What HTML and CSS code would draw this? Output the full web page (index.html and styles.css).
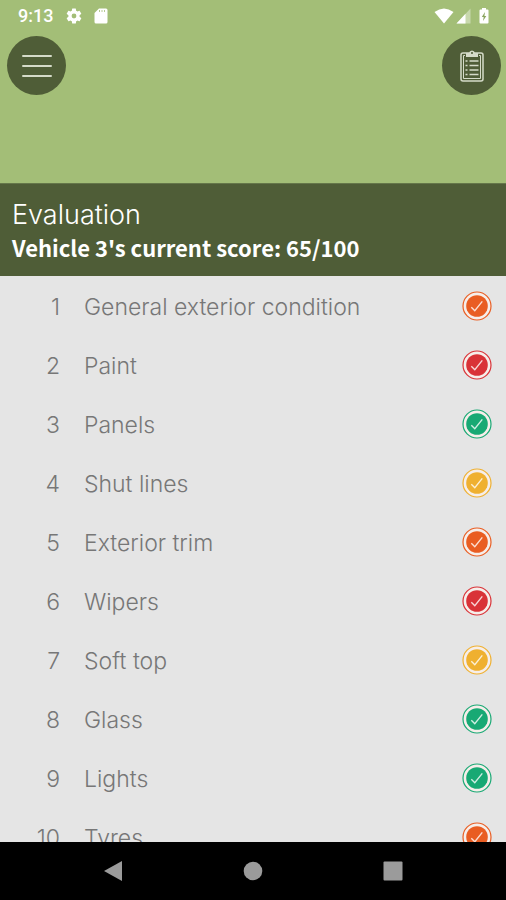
FILE: index.html
```html
<!DOCTYPE html>
<html lang="en">
<head>
<meta charset="utf-8">
<meta name="viewport" content="width=device-width, initial-scale=1">
<title>Evaluation</title>
<link rel="stylesheet" href="styles.css">
</head>
<body>
<svg class="sprite" aria-hidden="true">
  <symbol id="check" viewBox="0 0 30 30">
    <circle cx="15" cy="15" r="14" fill="#f6eeea" stroke="currentColor" stroke-width="1.2"/>
    <circle cx="15" cy="15" r="10.8" fill="currentColor"/>
    <path d="M9.3 16.2 12.8 19.8 20.3 10.4" fill="none" stroke="#fff" stroke-opacity=".8" stroke-width="1.4"/>
  </symbol>
</svg>
<header class="top">
  <div class="status">
    <span class="time">9:13</span>
    <svg class="gear" viewBox="0 0 24 24"><path fill="#fff" fill-rule="evenodd" d="M19.4 13a7.500 7.500 0 0 0 0-2l2.100-1.650a.5.5 0 0 0 .12-.64l-2-3.460a.5.5 0 0 0-.61-.22l-2.490 1a7.300 7.300 0 0 0-1.690-.98l-.38-2.650A.49.49 0 0 0 14 2h-4a.49.49 0 0 0-.49.420l-.38 2.650c-.61.25-1.170.59-1.690.98l-2.490-1a.5.5 0 0 0-.61.22l-2 3.460a.5.5 0 0 0 .12.640L4.570 11a7.900 7.900 0 0 0 0 2l-2.110 1.650a.5.5 0 0 0-.12.640l2 3.460c.12.220.390.300.610.220l2.490-1c.52.400 1.080.730 1.690.980l.38 2.650c.03.240.240.420.490.420h4c.25 0 .46-.18.490-.42l.38-2.650a7.700 7.700 0 0 0 1.690-.98l2.490 1c.23.090.490 0 .61-.22l2-3.460a.5.5 0 0 0-.12-.64zM12 15.200a3.200 3.200 0 1 1 0-6.400 3.200 3.200 0 0 1 0 6.400z"/></svg>
    <svg class="card" viewBox="0 0 14 16"><path fill="#fff" d="M5 .5h7Q13.500.5 13.500 2v12q0 1.500-1.500 1.500H2Q.5 15.500.5 14V5z"/><path stroke="#a3be77" stroke-width=".8" d="M5.500 2v2M8 2v2M10.500 2v2"/></svg>
    <span class="signals">
      <svg class="wifi" viewBox="0 0 20 16"><path fill="#fff" d="M.5 4Q10-3 19.500 4L10 15.500z"/></svg>
      <svg class="cell" viewBox="0 0 15 16"><path fill="#fff" fill-opacity=".4" d="M14.500.5v15H.5z"/><path fill="#fff" d="M9.500 5.800v9.700H.5z"/></svg>
      <svg class="battery" viewBox="0 0 10 16"><path fill="#fff" d="M3 0h4v1.500h1.500q1 0 1 1V14.500q0 1-1 1h-7q-1 0-1-1v-12q0-1 1-1H3z"/><path fill="#8aa45f" d="M6 4 2.800 9h1.900L4 13l3.300-5H5.400z"/></svg>
    </span>
  </div>
  <div class="actions">
    <button class="round" type="button" aria-label="Menu">
      <svg class="menu-icon" viewBox="0 0 30 24"><path stroke="#d5dbc9" stroke-width="2" stroke-linecap="round" d="M1 2h28M1 12h28M1 22h28"/></svg>
    </button>
    <button class="round" type="button" aria-label="Checklist">
      <svg class="clip-icon" viewBox="0 0 24 32" fill="none" stroke="#d5dbc9">
        <rect x="1" y="3" width="22" height="28" rx="2" stroke-width="1.500"/>
        <path stroke-width="1" d="M5 5.500H3.500v23h17v-23H19"/>
        <path fill="#d5dbc9" stroke="none" d="M6 3h3q.5-2.500 3-2.500T15 3h3v4H6z"/>
        <circle cx="12" cy="3" r="1" fill="#4b5933" stroke="none"/>
        <path stroke-width="1.500" d="M5.500 11h2M9.500 11h9M5.500 15.500h2M9.500 15.500h9M5.500 20h2M9.500 20h9M5.500 24.500h2M9.500 24.500h9"/>
      </svg>
    </button>
  </div>
</header>
<section class="heading">
  <h1>Evaluation</h1>
  <p>Vehicle 3's current score: 65/100</p>
</section>
<main class="scroll">
  <ol class="items">
    <li><span class="num">1</span><span class="name">General exterior condition</span><svg class="mark orange"><use href="#check"/></svg></li>
    <li><span class="num">2</span><span class="name">Paint</span><svg class="mark red"><use href="#check"/></svg></li>
    <li><span class="num">3</span><span class="name">Panels</span><svg class="mark green"><use href="#check"/></svg></li>
    <li><span class="num">4</span><span class="name">Shut lines</span><svg class="mark amber"><use href="#check"/></svg></li>
    <li><span class="num">5</span><span class="name">Exterior trim</span><svg class="mark orange"><use href="#check"/></svg></li>
    <li><span class="num">6</span><span class="name">Wipers</span><svg class="mark red"><use href="#check"/></svg></li>
    <li><span class="num">7</span><span class="name">Soft top</span><svg class="mark amber"><use href="#check"/></svg></li>
    <li><span class="num">8</span><span class="name">Glass</span><svg class="mark green"><use href="#check"/></svg></li>
    <li><span class="num">9</span><span class="name">Lights</span><svg class="mark green"><use href="#check"/></svg></li>
    <li><span class="num">10</span><span class="name">Tyres</span><svg class="mark orange"><use href="#check"/></svg></li>
  </ol>
</main>
<nav class="system">
  <button type="button" aria-label="Back"><svg viewBox="0 0 22 22"><path fill="#9b9b9b" d="M20 1v20L2 11z"/></svg></button>
  <button type="button" aria-label="Home"><svg viewBox="0 0 22 22"><circle cx="11" cy="11" r="9.300" fill="#9b9b9b"/></svg></button>
  <button type="button" aria-label="Recent apps"><svg viewBox="0 0 22 22"><rect x="1.500" y="1.500" width="19" height="19" rx="1" fill="#9b9b9b"/></svg></button>
</nav>
</body>
</html>
```
FILE: styles.css
```css
* {
  box-sizing: border-box;
}

body {
  margin: 0;
  height: 100vh;
  display: flex;
  flex-direction: column;
  background: #e5e5e5;
  font-family: Inter, "Liberation Sans", sans-serif;
  font-weight: 300;
}

svg {
  display: block;
  flex: none;
}

button {
  display: grid;
  place-items: center;
  padding: 0;
  border: 0;
  background: none;
}

.sprite {
  position: absolute;
  width: 0;
  height: 0;
}

.top {
  flex: none;
  padding-bottom: 88px;
  background: #a3be77;
}

.status {
  display: flex;
  align-items: center;
  height: 32px;
  padding: 0 17px 0 18px;
  margin-bottom: 4px;
}

.time {
  margin-right: 12px;
  color: #fff;
  font: 500 18px/32px Roboto, sans-serif;
}

.gear {
  width: 18px;
  height: 18px;
  margin-right: 11px;
}

.card {
  width: 14px;
  height: 16px;
}

.signals {
  display: flex;
  margin-left: auto;
}

.wifi {
  width: 20px;
  height: 16px;
  margin-right: 2px;
}

.cell {
  width: 15px;
  height: 16px;
  margin-right: 8px;
}

.battery {
  width: 10px;
  height: 16px;
}

.actions {
  display: flex;
  justify-content: space-between;
  padding: 0 5px 0 7px;
}

.round {
  width: 59px;
  height: 59px;
  border-radius: 50%;
  background: #4f5d37;
}

.menu-icon {
  width: 30px;
  height: 24px;
}

.clip-icon {
  width: 24px;
  height: 32px;
}

.heading {
  flex: none;
  padding: 14px 12px;
  border-top: 1px solid #65774a;
  background: #4f5d37;
  color: #fff;
}

.heading h1 {
  margin: 0;
  font-size: 27px;
  font-weight: 300;
  line-height: 34px;
}

.heading p {
  margin: 0;
  font: 700 22px/30px "Noto Sans CJK SC", sans-serif;
}

.scroll {
  flex: 1;
  min-height: 0;
  overflow: hidden;
}

.items {
  margin: 0;
  padding: 0;
  list-style: none;
}

.items li {
  display: flex;
  align-items: center;
  height: 59px;
  padding-right: 14px;
  color: #777;
  font-size: 23px;
  line-height: 28px;
}

.num,
.name {
  padding-top: 3px;
}

.num {
  width: 60px;
  text-align: right;
}

.name {
  flex: 1;
  padding-left: 24px;
}

.mark {
  width: 30px;
  height: 30px;
}

.orange {
  color: #e95d22;
}

.red {
  color: #d93237;
}

.green {
  color: #18a974;
}

.amber {
  color: #efb030;
}

.system {
  flex: none;
  display: flex;
  justify-content: center;
  gap: 96px;
  height: 58px;
  background: #000;
}

.system button {
  width: 44px;
}

.system svg {
  width: 22px;
  height: 22px;
}
```
